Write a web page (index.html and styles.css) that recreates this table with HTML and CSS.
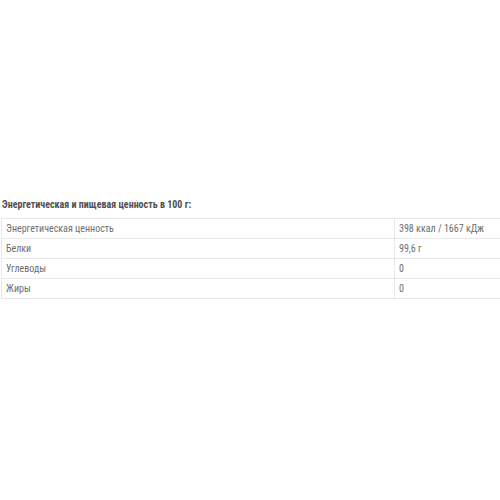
FILE: index.html
```html
<!DOCTYPE html>
<html lang="ru">
<head>
<meta charset="utf-8">
<link rel="stylesheet" href="styles.css">
</head>
<body>
<div class="page">
  <div class="nutrition">
    <div class="title">Энергетическая и пищевая ценность в 100 г:</div>
    <table class="facts">
      <tr><td class="name">Энергетическая ценность</td><td class="val">398 ккал / 1667 кДж</td></tr>
      <tr><td class="name">Белки</td><td class="val">99,6 г</td></tr>
      <tr><td class="name">Углеводы</td><td class="val">0</td></tr>
      <tr><td class="name">Жиры</td><td class="val">0</td></tr>
    </table>
  </div>
</div>
</body>
</html>
```
FILE: styles.css
```css
html, body {
  margin: 0;
  padding: 0;
  background: #fff;
  overflow: hidden;
}
body {
  font-family: "Roboto Condensed", Roboto, "Liberation Sans", sans-serif;
  color: #6e6e6e;
}
.page {
  width: 520px;
  padding: 198px 0 0 1px;
}
.title {
  font-size: 10px;
  font-weight: 700;
  color: #505050;
  line-height: 14px;
  padding-left: 1px;
  margin-bottom: 6px;
}
.facts {
  width: 520px;
  border-collapse: collapse;
  font-size: 10px;
}
.facts td {
  border: 1px solid #e8e8e8;
  height: 19px;
  padding: 0 0 0 4px;
  vertical-align: middle;
}
.facts .name {
  width: 388px;
}
```
